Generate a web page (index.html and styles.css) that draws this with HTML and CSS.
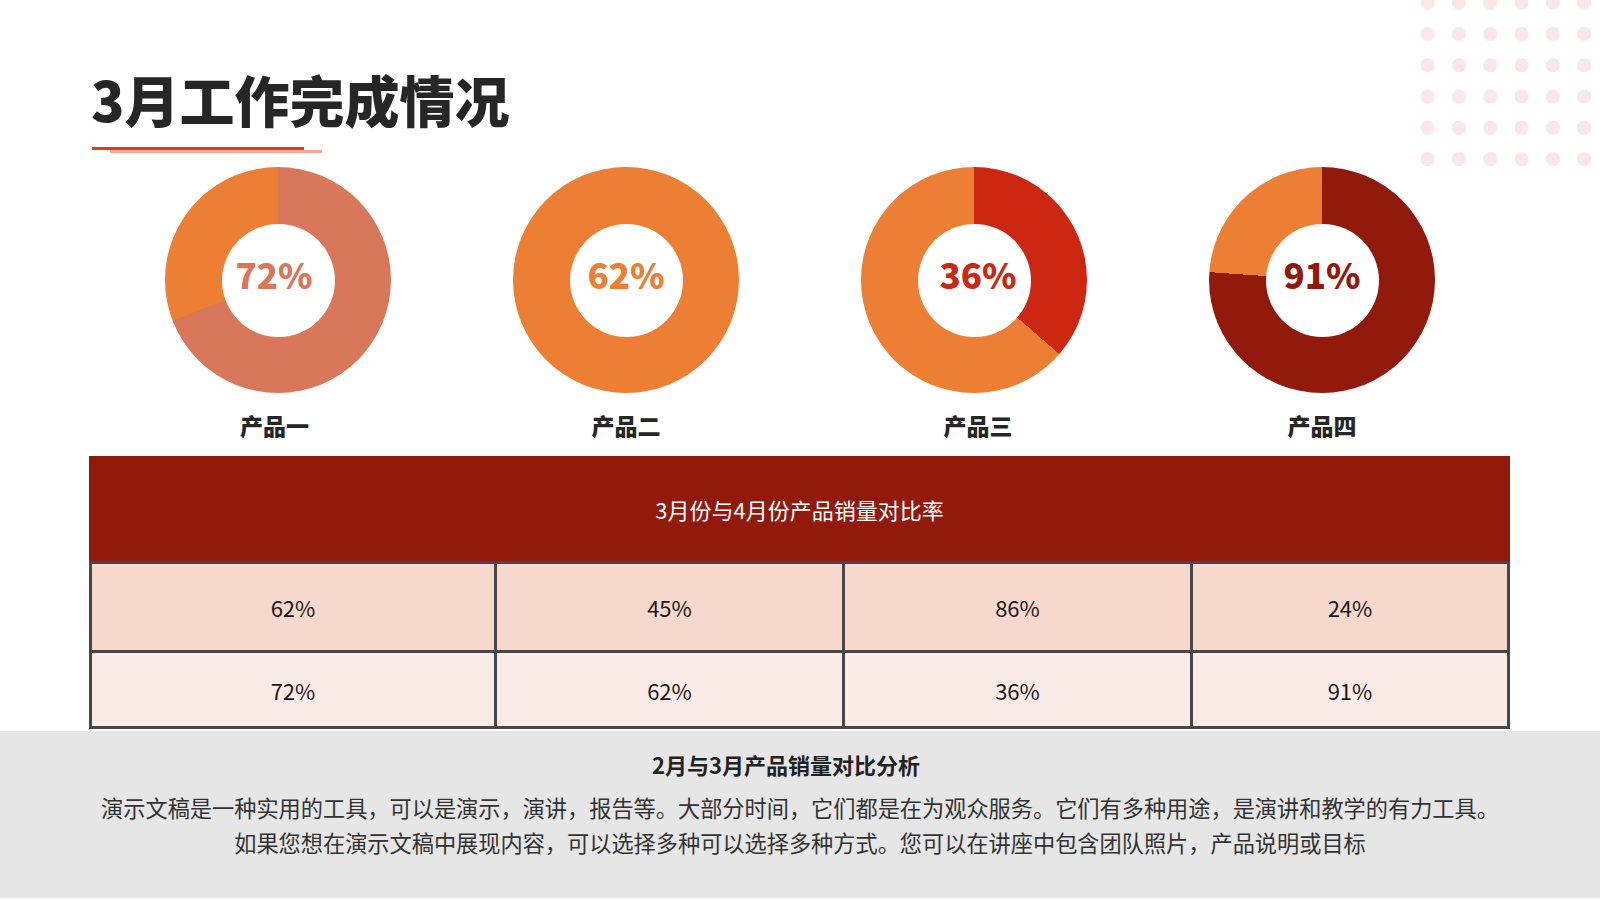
FILE: index.html
```html
<!DOCTYPE html>
<html lang="zh-CN">
<head>
<meta charset="utf-8">
<title>3月工作完成情况</title>
<link rel="stylesheet" href="styles.css">
</head>
<body>
<div class="slide">
  <div class="dots"></div>

  <header class="head">
    <h1 class="title">3月工作完成情况</h1>
    <div class="rule rule-main"></div>
    <div class="rule rule-shadow"></div>
  </header>

  <section class="charts">
    <div class="chart">
      <div class="donut donut-1"><div class="hole"><span class="pct pct-1">72%</span></div></div>
      <div class="label label-1">产品一</div>
    </div>
    <div class="chart">
      <div class="donut donut-2"><div class="hole"><span class="pct pct-2">62%</span></div></div>
      <div class="label">产品二</div>
    </div>
    <div class="chart">
      <div class="donut donut-3"><div class="hole"><span class="pct pct-3">36%</span></div></div>
      <div class="label label-3">产品三</div>
    </div>
    <div class="chart">
      <div class="donut donut-4"><div class="hole"><span class="pct pct-4">91%</span></div></div>
      <div class="label">产品四</div>
    </div>
  </section>

  <section class="compare">
    <div class="compare-head">3月份与4月份产品销量对比率</div>
    <div class="compare-body">
      <div class="cell row-a">62%</div>
      <div class="cell row-a">45%</div>
      <div class="cell row-a">86%</div>
      <div class="cell row-a">24%</div>
      <div class="cell row-b">72%</div>
      <div class="cell row-b">62%</div>
      <div class="cell row-b">36%</div>
      <div class="cell row-b">91%</div>
    </div>
  </section>

  <section class="summary">
    <h2 class="summary-title">2月与3月产品销量对比分析</h2>
    <p class="summary-text">演示文稿是一种实用的工具，可以是演示，演讲，报告等。大部分时间，它们都是在为观众服务。它们有多种用途，是演讲和教学的有力工具。<br>如果您想在演示文稿中展现内容，可以选择多种可以选择多种方式。您可以在讲座中包含团队照片，产品说明或目标</p>
  </section>
</div>
</body>
</html>
```

FILE: styles.css
```css
* {
  box-sizing: border-box;
}

html, body {
  margin: 0;
  padding: 0;
  background: #ffffff;
}

body {
  font-family: "Noto Sans CJK SC", "Noto Sans", sans-serif;
  color: #262626;
}

.slide {
  position: relative;
  width: 1600px;
  height: 900px;
  overflow: hidden;
  background: #ffffff;
}

/* decorative dot pattern in the top-right corner */
.dots {
  position: absolute;
  left: 1412px;
  top: -13px;
  width: 188px;
  height: 188px;
  background-image: radial-gradient(circle, #fbe8e6 6.8px, rgba(251, 232, 230, 0) 7.4px);
  background-size: 31.3px 31.3px;
  background-position: 0 0;
}

/* header */
.head {
  padding: 70px 0 0 91px;
}

.title {
  margin: 0;
  font-size: 55px;
  line-height: 56px;
  height: 56px;
  font-weight: 900;
  color: #262626;
  letter-spacing: 0;
}

.rule {
  height: 3px;
  width: 212px;
}

.rule-main {
  margin-top: 21px;
  margin-left: 1px;
  background: #e03b1f;
}

.rule-shadow {
  margin-left: 19px;
  background: #f2a797;
}

/* donut charts */
.charts {
  margin-top: 14px;
  padding-left: 104px;
  display: grid;
  grid-template-columns: repeat(4, 348px);
}

.chart {
  display: flex;
  flex-direction: column;
  align-items: center;
}

.donut {
  width: 226px;
  height: 226px;
  border-radius: 50%;
  display: flex;
  align-items: center;
  justify-content: center;
}

.donut-1 {
  background: conic-gradient(#d9775a 0deg 249deg, #ec7f33 249deg 360deg);
}

.donut-2 {
  background: conic-gradient(#ec7f33 0deg 223deg, #ec7f33 223deg 360deg);
}

.donut-3 {
  background: conic-gradient(#cc2811 0deg 131deg, #ec7f33 131deg 360deg);
}

.donut-4 {
  background: conic-gradient(#921a0c 0deg 274deg, #ec7f33 274deg 360deg);
}

.hole {
  width: 113px;
  height: 113px;
  border-radius: 50%;
  background: #ffffff;
  display: flex;
  align-items: center;
  justify-content: center;
}

.pct {
  font-size: 35px;
  line-height: 36px;
  font-weight: 900;
  padding-bottom: 13px;
  white-space: nowrap;
}

.pct-1 { color: #d9775a; margin-right: 8px; }
.pct-2 { color: #ec7f33; }
.pct-3 { color: #cc2811; margin-left: 8px; }
.pct-4 { color: #921a0c; }

.label {
  margin-top: 17px;
  font-size: 23px;
  line-height: 30px;
  font-weight: 900;
  color: #262626;
}

.label-1 {
  margin-right: 7px;
}

.label-3 {
  margin-left: 8px;
}

/* comparison table */
.compare {
  margin: 16px 0 0 89px;
  width: 1421px;
}

.compare-head {
  height: 105px;
  background: #921a0c;
  color: #ffffff;
  font-size: 22px;
  display: flex;
  align-items: center;
  justify-content: center;
}

.compare-body {
  display: grid;
  grid-template-columns: 402px 345px 345px 314px;
  grid-template-rows: 86px 73px;
  gap: 3px;
  padding: 3px;
  background: #474747;
}

.cell {
  display: flex;
  align-items: center;
  justify-content: center;
  font-size: 22px;
  color: #1a1a1a;
}

.row-a { background: #f7d8cd; }
.row-b { background: #fbebe6; }

/* summary band */
.summary {
  margin-top: 2px;
  height: 167px;
  background: #e6e6e6;
  padding-top: 18px;
  text-align: center;
}

.summary-title {
  margin: 0;
  padding-right: 28px;
  font-size: 22px;
  line-height: 30px;
  font-weight: 700;
  color: #222222;
}

.summary-text {
  margin: 11px 0 0;
  font-size: 22.2px;
  line-height: 35px;
  color: #333333;
  white-space: nowrap;
}
```
